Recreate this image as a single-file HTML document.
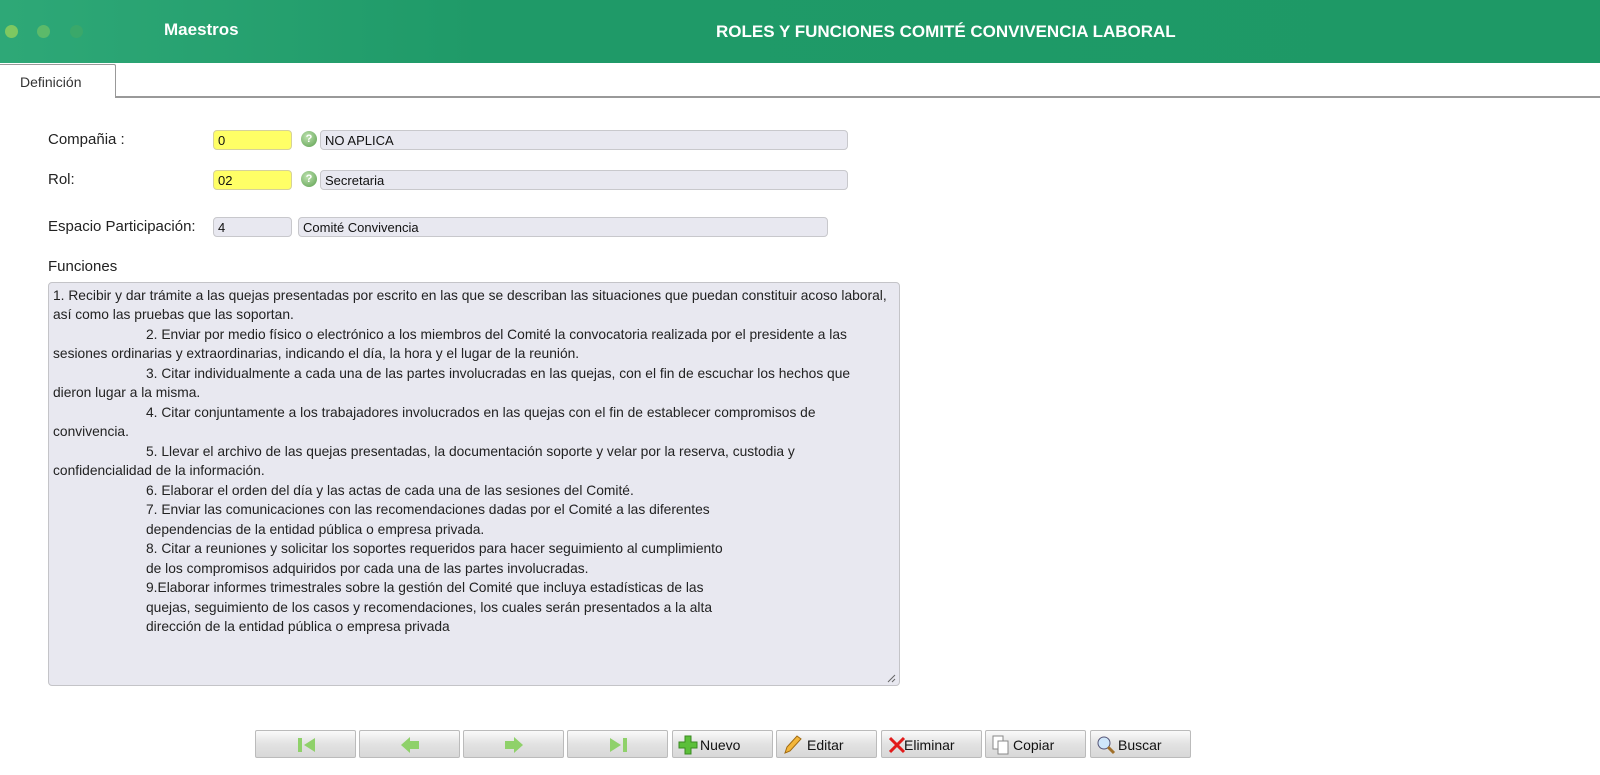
<!DOCTYPE html>
<html><head><meta charset="utf-8"><style>
*{box-sizing:border-box;margin:0;padding:0}
body{width:1600px;height:775px;background:#fff;font-family:"Liberation Sans",Arial,sans-serif;position:relative;overflow:hidden;color:#222}
.hdr{position:absolute;left:0;top:0;width:1600px;height:63px;background:linear-gradient(90deg,#2ea877 0%,#1f9a68 30%,#1e9966 100%)}
.dot{position:absolute;top:25px;width:13px;height:13px;border-radius:50%}
.hdr .t1{position:absolute;left:164px;top:20px;color:#fff;font-weight:bold;font-size:17px}
.hdr .t2{position:absolute;left:716px;top:22px;color:#fff;font-weight:bold;font-size:17px}
.tabline{position:absolute;left:0;top:96px;width:1600px;height:2px;background:#999}
.tab{position:absolute;left:0;top:64px;width:116px;height:34px;background:#fff;border:1px solid #999;border-left:none;border-bottom:none;border-top-right-radius:2px;font-size:14px;color:#333;padding:9px 0 0 20px}
.lbl{position:absolute;font-size:15px;color:#222}
.in{position:absolute;height:20px;border:1px solid #c8c8cc;border-radius:4px;background:#e8e8f0;font-size:13px;padding:2px 0 0 4px;color:#111}
.y{background:#ffff66;border-color:#d6d29a}
.q{position:absolute;width:16px;height:16px;border-radius:50%;background:radial-gradient(circle at 40% 35%,#bfe3b0,#5a9e4e);color:#fff;font-size:11px;font-weight:bold;text-align:center;line-height:16px}
.ta{position:absolute;left:48px;top:282px;width:852px;height:404px;background:#e8e8f0;border:1px solid #c4c4c8;border-radius:4px}
.ln{position:absolute;font-size:13.8px;white-space:nowrap;color:#222}
.btn{position:absolute;top:730px;width:101px;height:28px;border:1px solid #bbb;border-radius:2px;background:linear-gradient(#fafafa,#e2e2e2 50%,#d8d8d8);font-size:14px;color:#111}
.btn span{position:absolute;top:6px}
</style></head><body>
<div class="hdr">
<div class="dot" style="left:5px;background:#7ec861"></div>
<div class="dot" style="left:37px;background:#5cba6a"></div>
<div class="dot" style="left:70px;background:#3aa86a"></div>
<div class="t1">Maestros</div>
<div class="t2">ROLES Y FUNCIONES COMITÉ CONVIVENCIA LABORAL</div>
</div>
<div class="tabline"></div>
<div class="tab">Definición</div>

<div class="lbl" style="left:48px;top:131px">Compañia :</div>
<div class="in y" style="left:213px;top:130px;width:79px">0</div>
<div class="q" style="left:301px;top:131px">?</div>
<div class="in" style="left:320px;top:130px;width:528px">NO APLICA</div>

<div class="lbl" style="left:48px;top:171px">Rol:</div>
<div class="in y" style="left:213px;top:170px;width:79px">02</div>
<div class="q" style="left:301px;top:171px">?</div>
<div class="in" style="left:320px;top:170px;width:528px">Secretaria</div>

<div class="lbl" style="left:48px;top:218px">Espacio Participación:</div>
<div class="in" style="left:213px;top:217px;width:79px">4</div>
<div class="in" style="left:298px;top:217px;width:530px">Comité Convivencia</div>

<div class="lbl" style="left:48px;top:258px">Funciones</div>
<div class="ta"></div>
<div class="ln" style="left:53px;top:288px">1. Recibir y dar trámite a las quejas presentadas por escrito en las que se describan las situaciones que puedan constituir acoso laboral,</div>
<div class="ln" style="left:53px;top:307px">así como las pruebas que las soportan.</div>
<div class="ln" style="left:146px;top:327px">2. Enviar por medio físico o electrónico a los miembros del Comité la convocatoria realizada por el presidente a las</div>
<div class="ln" style="left:53px;top:346px">sesiones ordinarias y extraordinarias, indicando el día, la hora y el lugar de la reunión.</div>
<div class="ln" style="left:146px;top:366px">3. Citar individualmente a cada una de las partes involucradas en las quejas, con el fin de escuchar los hechos que</div>
<div class="ln" style="left:53px;top:385px">dieron lugar a la misma.</div>
<div class="ln" style="left:146px;top:405px">4. Citar conjuntamente a los trabajadores involucrados en las quejas con el fin de establecer compromisos de</div>
<div class="ln" style="left:53px;top:424px">convivencia.</div>
<div class="ln" style="left:146px;top:444px">5. Llevar el archivo de las quejas presentadas, la documentación soporte y velar por la reserva, custodia y</div>
<div class="ln" style="left:53px;top:463px">confidencialidad de la información.</div>
<div class="ln" style="left:146px;top:483px">6. Elaborar el orden del día y las actas de cada una de las sesiones del Comité.</div>
<div class="ln" style="left:146px;top:502px">7. Enviar las comunicaciones con las recomendaciones dadas por el Comité a las diferentes</div>
<div class="ln" style="left:146px;top:522px">dependencias de la entidad pública o empresa privada.</div>
<div class="ln" style="left:146px;top:541px">8. Citar a reuniones y solicitar los soportes requeridos para hacer seguimiento al cumplimiento</div>
<div class="ln" style="left:146px;top:561px">de los compromisos adquiridos por cada una de las partes involucradas.</div>
<div class="ln" style="left:146px;top:580px">9.Elaborar informes trimestrales sobre la gestión del Comité que incluya estadísticas de las</div>
<div class="ln" style="left:146px;top:600px">quejas, seguimiento de los casos y recomendaciones, los cuales serán presentados a la alta</div>
<div class="ln" style="left:146px;top:619px">dirección de la entidad pública o empresa privada</div>
<svg style="position:absolute;left:886px;top:673px" width="10" height="10"><path d="M9 2L2 9M9 6L6 9" stroke="#666" stroke-width="1"/></svg>

<div class="btn" style="left:255px"><svg style="position:absolute;left:41px;top:5px" width="20" height="18"><rect x="1" y="2" width="4" height="14" fill="#8fd16a"/><path d="M18 2L7 9L18 16Z" fill="#8fd16a"/></svg></div>
<div class="btn" style="left:359px"><svg style="position:absolute;left:40px;top:5px" width="20" height="18"><path d="M1 9L10 1V5H19V13H10V17Z" fill="#8fd16a"/></svg></div>
<div class="btn" style="left:463px"><svg style="position:absolute;left:40px;top:5px" width="20" height="18"><path d="M19 9L10 1V5H1V13H10V17Z" fill="#8fd16a"/></svg></div>
<div class="btn" style="left:567px"><svg style="position:absolute;left:40px;top:5px" width="20" height="18"><path d="M2 2L13 9L2 16Z" fill="#8fd16a"/><rect x="15" y="2" width="4" height="14" fill="#8fd16a"/></svg></div>
<div class="btn" style="left:672px"><svg style="position:absolute;left:5px;top:4px" width="20" height="20"><path d="M7 1H13V7H19V13H13V19H7V13H1V7H7Z" fill="#5cbf3a" stroke="#3a8a22"/></svg><span style="left:27px">Nuevo</span></div>
<div class="btn" style="left:776px"><svg style="position:absolute;left:5px;top:4px" width="20" height="20"><path d="M3 18L5 12L15 1L19 4L8 16Z" fill="#f3b63a" stroke="#a06a10"/></svg><span style="left:30px">Editar</span></div>
<div class="btn" style="left:881px"><svg style="position:absolute;left:6px;top:5px" width="18" height="18"><path d="M2 2L16 16M16 2L2 16" stroke="#e21b1b" stroke-width="3"/></svg><span style="left:22px">Eliminar</span></div>
<div class="btn" style="left:985px"><svg style="position:absolute;left:5px;top:4px" width="20" height="20"><rect x="2" y="1" width="10" height="13" fill="#fff" stroke="#888"/><rect x="7" y="6" width="10" height="13" fill="#fff" stroke="#888"/></svg><span style="left:27px">Copiar</span></div>
<div class="btn" style="left:1090px"><svg style="position:absolute;left:5px;top:4px" width="20" height="20"><circle cx="8" cy="8" r="6" fill="#cfe6fa" stroke="#557"/><path d="M12 12L18 18" stroke="#a0702a" stroke-width="3"/></svg><span style="left:27px">Buscar</span></div>
</body></html>
